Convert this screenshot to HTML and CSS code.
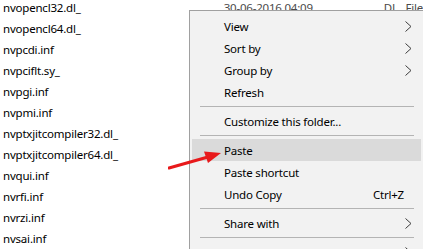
FILE: index.html
```html
<!DOCTYPE html>
<html>
<head>
  <title>Explorer context menu</title>
  <link rel="stylesheet" href="styles.css">
</head>
<body>

  <div class="files">
    <div class="row">
      <span class="name">nvopencl32.dl_</span>
      <span class="date">30-06-2016 04:09</span>
      <span class="type">DL_ File</span>
    </div>
    <div class="row"><span class="name">nvopencl64.dl_</span></div>
    <div class="row"><span class="name">nvpcdi.inf</span></div>
    <div class="row"><span class="name">nvpciflt.sy_</span></div>
    <div class="row"><span class="name">nvpgi.inf</span></div>
    <div class="row"><span class="name">nvpmi.inf</span></div>
    <div class="row"><span class="name">nvptxjitcompiler32.dl_</span></div>
    <div class="row"><span class="name">nvptxjitcompiler64.dl_</span></div>
    <div class="row"><span class="name">nvqui.inf</span></div>
    <div class="row"><span class="name">nvrfi.inf</span></div>
    <div class="row"><span class="name">nvrzi.inf</span></div>
    <div class="row"><span class="name">nvsai.inf</span></div>
  </div>

  <!-- context menu -->
  <div class="menu">
    <div class="item">View <svg class="chev" width="7" height="11"><polyline points="0.5,0.5 6,5.5 0.5,10.5"/></svg></div>
    <div class="item">Sort by <svg class="chev" width="7" height="11"><polyline points="0.5,0.5 6,5.5 0.5,10.5"/></svg></div>
    <div class="item">Group by <svg class="chev" width="7" height="11"><polyline points="0.5,0.5 6,5.5 0.5,10.5"/></svg></div>
    <div class="item">Refresh</div>
    <div class="sep"></div>
    <div class="item">Customize this folder...</div>
    <div class="sep"></div>
    <div class="item active">Paste</div>
    <div class="item">Paste shortcut</div>
    <div class="item">Undo Copy <span class="key">Ctrl+Z</span></div>
    <div class="sep"></div>
    <div class="item">Share with <svg class="chev" width="7" height="11"><polyline points="0.5,0.5 6,5.5 0.5,10.5"/></svg></div>
    <div class="sep"></div>
    <div class="item">New <svg class="chev" width="7" height="11"><polyline points="0.5,0.5 6,5.5 0.5,10.5"/></svg></div>
  </div>

  <!-- red pointer -->
  <svg class="pointer" width="60" height="24" viewBox="0 0 60 24">
    <line x1="1" y1="20" x2="40" y2="9" stroke="#e8191b" stroke-width="3" stroke-linecap="round"/>
    <polygon points="53,5 36,3.5 40,15" fill="#e8191b"/>
  </svg>

</body>
</html>
```

FILE: styles.css
```css
body {
  margin: 0;
  background: #fff;
  font-family: "Noto Sans", "Open Sans", sans-serif;
  font-size: 11.5px;
  letter-spacing: -0.2px;
  color: #000;
  overflow: hidden;
}

.files {
  margin-top: -3px;
  padding-left: 3px;
}

.row {
  display: flex;
  height: 21px;
  line-height: 21px;
  white-space: nowrap;
}

.name {
  width: 222px;
}

.date {
  width: 161px;
  color: #4a4a4a;
}

.type {
  color: #4a4a4a;
}

/* Context menu */
.menu {
  position: absolute;
  left: 189px;
  top: 10px;
  width: 235px;
  box-sizing: border-box;
  background: #f2f2f2;
  border: 1px solid #a0a0a0;
  padding: 4px 2px;
}

.item {
  display: flex;
  align-items: center;
  height: 22px;
  padding-left: 32px;
  padding-right: 9px;
}

.item.active {
  background: #dadada;
}

.chev {
  margin-left: auto;
  fill: none;
  stroke: #3c3c3c;
  stroke-width: 1;
}

.key {
  margin-left: auto;
  margin-right: 8px;
}

.sep {
  height: 1px;
  background: #b4b4b4;
  margin: 3px 7px 3px 8px;
}

.pointer {
  position: absolute;
  left: 168px;
  top: 148px;
}
```
